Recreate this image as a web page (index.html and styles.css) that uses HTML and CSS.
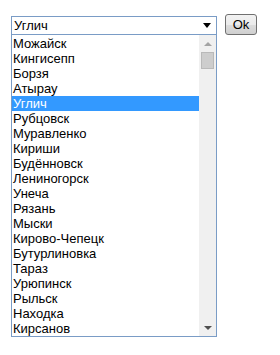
FILE: index.html
```html
<!DOCTYPE html>
<html>
<head>
<meta charset="utf-8">
<link rel="stylesheet" href="styles.css">
</head>
<body>
<div class="page">
  <div class="combo">
    <div class="select"><span class="value">Углич</span><span class="arrow"></span></div>
    <div class="list">
      <ul class="options">
        <li>Можайск</li>
        <li>Кингисепп</li>
        <li>Борзя</li>
        <li>Атырау</li>
        <li class="selected">Углич</li>
        <li>Рубцовск</li>
        <li>Муравленко</li>
        <li>Кириши</li>
        <li>Будённовск</li>
        <li>Лениногорск</li>
        <li>Унеча</li>
        <li>Рязань</li>
        <li>Мыски</li>
        <li>Кирово-Чепецк</li>
        <li>Бутурлиновка</li>
        <li>Тараз</li>
        <li>Урюпинск</li>
        <li>Рыльск</li>
        <li>Находка</li>
        <li>Кирсанов</li>
      </ul>
      <div class="scrollbar">
        <div class="sb-btn"><span class="tri-up"></span></div>
        <div class="thumb"></div>
        <div class="track"></div>
        <div class="sb-btn"><span class="tri-down"></span></div>
      </div>
    </div>
  </div>
  <button class="ok">Ok</button>
</div>
</body>
</html>
```
FILE: styles.css
```css
body {
  margin: 0;
  background: #fff;
  font-family: "Liberation Sans", Arial, sans-serif;
  font-size: 13px;
  color: #000;
}
.page {
  display: flex;
  align-items: flex-start;
  gap: 8px;
  padding: 14px 0 0 11px;
}
.combo {
  width: 206px;
  margin-top: 2px;
}
.select {
  box-sizing: border-box;
  height: 19px;
  border: 1px solid #7a9cc6;
  display: flex;
  align-items: center;
  justify-content: space-between;
  padding: 0 5px 0 2px;
  line-height: 15px;
}
.arrow {
  width: 0;
  height: 0;
  border-left: 4px solid transparent;
  border-right: 4px solid transparent;
  border-top: 5px solid #000;
}
.list {
  display: flex;
  border: 1px solid #7a9cc6;
  border-top: 0;
  height: 301px;
}
.options {
  flex: 1;
  list-style: none;
  margin: 0;
  padding: 1px 0 0 0;
}
.options li {
  height: 15px;
  line-height: 15px;
  padding-left: 1px;
  white-space: nowrap;
}
.options li.selected {
  background: #3399ff;
  color: #fff;
}
.scrollbar {
  width: 17px;
  background: #f0f0f0;
  display: flex;
  flex-direction: column;
}
.sb-btn {
  height: 17px;
  display: flex;
  align-items: center;
  justify-content: center;
}
.tri-up {
  width: 0;
  height: 0;
  border-left: 4px solid transparent;
  border-right: 4px solid transparent;
  border-bottom: 4px solid #a3a3a3;
}
.tri-down {
  width: 0;
  height: 0;
  border-left: 4px solid transparent;
  border-right: 4px solid transparent;
  border-top: 4px solid #505050;
}
.thumb {
  box-sizing: border-box;
  height: 17px;
  margin: 0 2px;
  background: #cdcdcd;
  border: 1px solid #b9b9b9;
}
.track {
  flex: 1;
}
.ok {
  box-sizing: border-box;
  width: 32px;
  height: 21px;
  padding: 0;
  border: 1px solid #707070;
  border-radius: 3px;
  background: linear-gradient(#f2f2f2, #ebebeb 50%, #dddddd 50%, #cfcfcf);
  font-family: "Liberation Sans", Arial, sans-serif;
  font-size: 13px;
  color: #000;
}
```
